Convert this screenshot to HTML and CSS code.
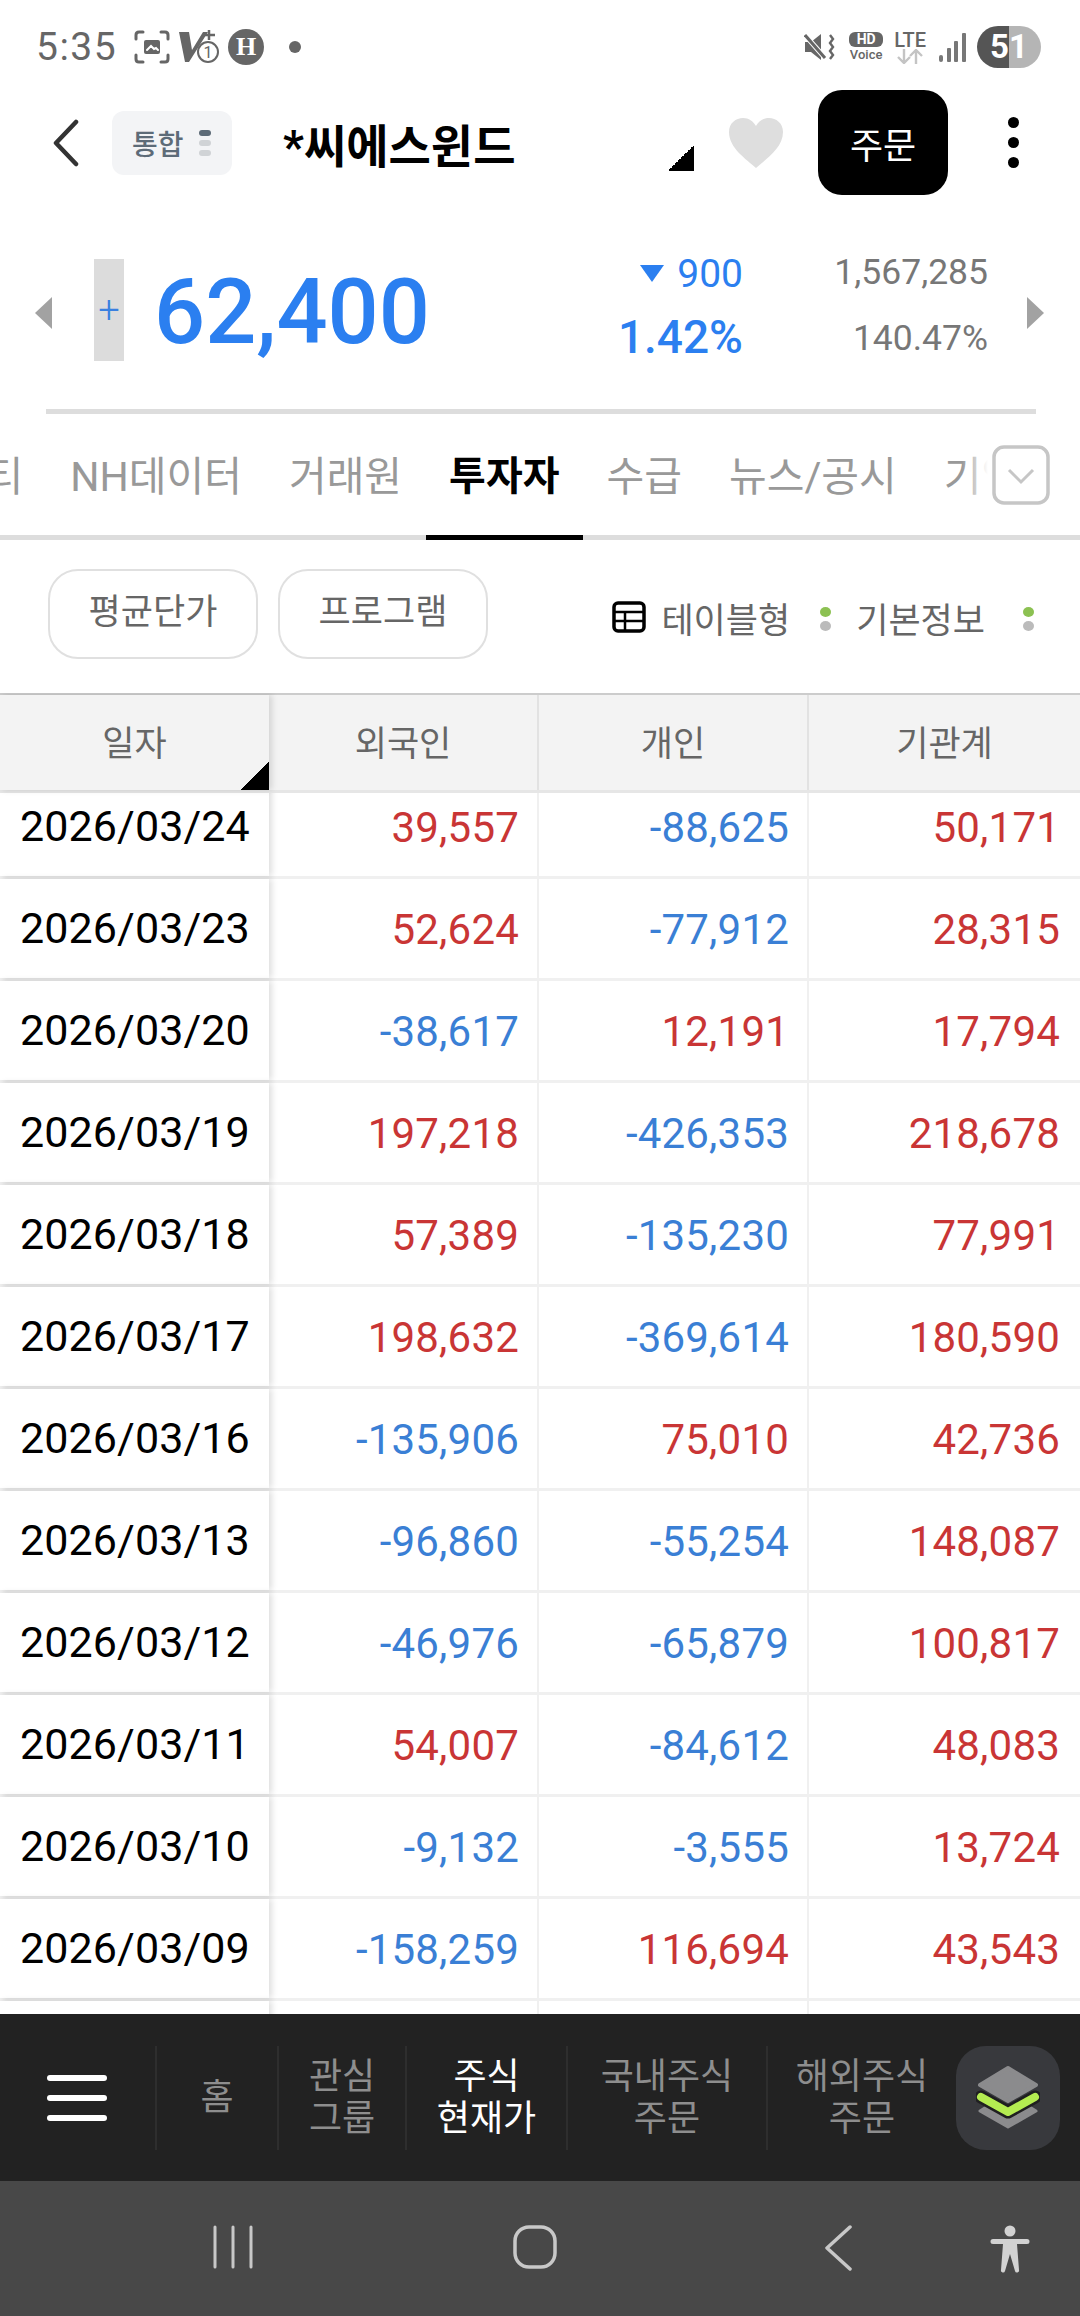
FILE: index.html
```html
<!DOCTYPE html>
<html lang="ko">
<head>
    <meta charset="UTF-8">
    <title>현재가 투자자</title>
    <meta name="viewport" content="width=device-width, initial-scale=1.0">
    <link rel="stylesheet" href="styles.css">
</head>
<body>
<div class="screen">
    <div class="status">
        <span class="clock">5:35</span>
        <svg class="st-shot" width="36" height="34" viewBox="0 0 36 34" fill="none" stroke="#666" stroke-width="3" stroke-linecap="round">
            <path d="M2 9V5q0-3 3-3h4M27 2h4q3 0 3 3v4M34 25v4q0 3-3 3h-4M9 32H5q-3 0-3-3v-4"/>
            <rect x="10" y="10" width="16" height="14" rx="2" fill="#666" stroke="none"/>
            <path d="M13 20l4-4 3 3 2-1 2 2" stroke="#fff" stroke-width="2"/>
        </svg>
        <svg class="st-v" width="40" height="34" viewBox="0 0 40 34">
            <path d="M0 2h10l3 18L24 2h5L10 32H6z" fill="#666"/>
            <path d="M30 0v10M25 5h11" stroke="#666" stroke-width="2.5"/>
            <circle cx="29" cy="22" r="10" fill="#fff" stroke="#666" stroke-width="2"/>
            <text x="29" y="28" font-size="16" text-anchor="middle" fill="#666" font-family="Roboto, sans-serif">1</text>
        </svg>
        <span class="st-h">H</span>
        <span class="st-dot"></span>
        <span class="status-gap"></span>
        <svg class="st-mute" width="32" height="30" viewBox="0 0 32 30">
            <path d="M1 10h6l10-8v26L7 20H1z" fill="#666"/>
            <path d="M0 2l22 25" stroke="#fff" stroke-width="5"/>
            <path d="M1 3l20 23" stroke="#666" stroke-width="3"/>
            <path d="M26 3l3 4-3 4 3 4-3 4 3 4-3 4" fill="none" stroke="#666" stroke-width="2.4"/>
        </svg>
        <span class="st-hd"><b>HD</b><i>Voice</i></span>
        <span class="st-lte"><b>LTE</b>
            <svg width="26" height="15" viewBox="0 0 26 15" fill="none" stroke-width="2.4">
                <path d="M7 0v13M1 8l6 6 6-6" stroke="#c4c4c4"/>
                <path d="M19 15V2M13 7l6-6 6 6" stroke="#c4c4c4"/>
            </svg>
        </span>
        <svg class="st-signal" width="27" height="29" viewBox="0 0 27 29" fill="#777">
            <rect x="0" y="22" width="4" height="7" rx="2"/>
            <rect x="8" y="15" width="4" height="14" rx="1"/>
            <rect x="15" y="8" width="4" height="21" rx="1"/>
            <rect x="23" y="0" width="4" height="29" rx="1"/>
        </svg>
        <span class="st-batt">51</span>
    </div>

    <div class="topbar">
        <svg class="back" width="26" height="48" viewBox="0 0 26 48" fill="none" stroke="#333" stroke-width="4.5" stroke-linecap="round" stroke-linejoin="round">
            <path d="M23 3L3 24l20 21"/>
        </svg>
        <div class="chip">
            <span>통합</span>
            <span class="chip-dots"><i class="on"></i><i></i><i></i></span>
        </div>
        <div class="title">*씨에스윈드</div>
        <span class="title-tri"></span>
        <svg class="heart" width="56" height="52" viewBox="0 0 56 52">
            <path d="M28 51C18 42 1 31 1 15 1 6 8 1 15 1c6 0 10 3 13 8 3-5 7-8 13-8 7 0 14 5 14 14 0 16-17 27-27 36z" fill="#dedede"/>
        </svg>
        <button class="order">주문</button>
        <div class="more"><i></i><i></i><i></i></div>
    </div>

    <div class="price">
        <span class="arrow arrow-l"></span>
        <span class="plus">+</span>
        <span class="now">62,400</span>
        <div class="change">
            <div class="chg-top"><span class="chg-tri"></span>900</div>
            <div class="chg-pct">1.42%</div>
        </div>
        <div class="volume">
            <div>1,567,285</div>
            <div>140.47%</div>
        </div>
        <span class="arrow arrow-r"></span>
    </div>
    <div class="rule"></div>

    <div class="tabs">
        <div class="tab tab-first">티</div>
        <div class="tab">NH데이터</div>
        <div class="tab">거래원</div>
        <div class="tab active">투자자</div>
        <div class="tab">수급</div>
        <div class="tab">뉴스/공시</div>
        <div class="tab">기업정보</div>
        <div class="tab-more">
            <svg width="58" height="60" viewBox="0 0 58 60" fill="#fff" stroke="#c6c6c6" stroke-width="3.5">
                <rect x="2" y="2" width="54" height="56" rx="10"/>
                <path d="M17 25l12 12 12-12" fill="none" stroke-width="3"/>
            </svg>
        </div>
    </div>

    <div class="tools">
        <button class="pill">평균단가</button>
        <button class="pill">프로그램</button>
        <div class="tools-right">
            <svg width="34" height="32" viewBox="0 0 34 32" fill="none" stroke="#000" stroke-width="2.5">
                <rect x="2" y="2" width="30" height="28" rx="4" stroke-width="3.5"/>
                <path d="M2 11h30M2 20h30M13 11v19"/>
            </svg>
            <span class="tool-text">테이블형</span>
            <span class="tool-dots"><i class="on"></i><i></i></span>
            <span class="tool-text">기본정보</span>
            <span class="tool-dots tool-dots-last"><i class="on"></i><i></i></span>
        </div>
    </div>

    <div class="grid">
        <div class="row head">
            <div class="cell date">일자</div>
            <div class="cell">외국인</div>
            <div class="cell">개인</div>
            <div class="cell">기관계</div>
        </div>
        <div class="grid-body" id="gridBody"></div>
    </div>

    <div class="nav">
        <div class="burger"><i></i><i></i><i></i></div>
        <div class="nav-item n-home">홈</div>
        <div class="nav-item n-watch">관심<br>그룹</div>
        <div class="nav-item n-cur">주식<br>현재가</div>
        <div class="nav-item n-kr">국내주식<br>주문</div>
        <div class="nav-item n-us">해외주식<br>주문</div>
        <div class="layers">
            <svg width="64" height="66" viewBox="0 0 64 66" stroke-linejoin="round" stroke-linecap="round">
                <path d="M32 3L60 20 32 36 4 20z" fill="#8b8b8d" stroke="#8b8b8d" stroke-width="4"/>
                <path d="M4 46L32 62 60 46 52 41 32 52 12 41z" fill="#8b8b8d" stroke="#8b8b8d" stroke-width="3"/>
                <path d="M5 32L32 47 59 32" fill="none" stroke="#1f1f20" stroke-width="13"/>
                <path d="M5 32L32 47 59 32" fill="none" stroke="#b4ec51" stroke-width="8"/>
            </svg>
        </div>
    </div>

    <div class="sysbar">
        <svg class="sys-recent" width="40" height="44" viewBox="0 0 40 44" stroke="#c8c8c8" stroke-width="3" stroke-linecap="round">
            <path d="M2 2v40M20 2v40M38 2v40"/>
        </svg>
        <svg class="sys-home" width="44" height="44" viewBox="0 0 44 44" fill="none" stroke="#c8c8c8" stroke-width="3.5">
            <rect x="2" y="2" width="40" height="40" rx="14"/>
        </svg>
        <svg class="sys-back" width="28" height="46" viewBox="0 0 28 46" fill="none" stroke="#c8c8c8" stroke-width="3.5" stroke-linecap="round" stroke-linejoin="round">
            <path d="M26 2L3 23l23 21"/>
        </svg>
        <svg class="sys-person" width="40" height="48" viewBox="0 0 40 48" fill="#d2d2d2">
            <circle cx="20" cy="6" r="5.5"/>
            <path d="M3 14h34a2.5 2.5 0 0 1 0 5H27l2 26a2 2 0 0 1-4 1l-5-17-5 17a2 2 0 0 1-4-1l2-26H3a2.5 2.5 0 0 1 0-5z"/>
        </svg>
    </div>
</div>

<script>
    // date, foreign, retail, institution
    const rows = [
        ['2026/03/24', '39,557', '-88,625', '50,171'],
        ['2026/03/23', '52,624', '-77,912', '28,315'],
        ['2026/03/20', '-38,617', '12,191', '17,794'],
        ['2026/03/19', '197,218', '-426,353', '218,678'],
        ['2026/03/18', '57,389', '-135,230', '77,991'],
        ['2026/03/17', '198,632', '-369,614', '180,590'],
        ['2026/03/16', '-135,906', '75,010', '42,736'],
        ['2026/03/13', '-96,860', '-55,254', '148,087'],
        ['2026/03/12', '-46,976', '-65,879', '100,817'],
        ['2026/03/11', '54,007', '-84,612', '48,083'],
        ['2026/03/10', '-9,132', '-3,555', '13,724'],
        ['2026/03/09', '-158,259', '116,694', '43,543'],
        ['', '', '', '']
    ];

    const gridBody = document.getElementById('gridBody');
    rows.forEach(row => {
        const el = document.createElement('div');
        el.className = 'row';
        row.forEach((value, i) => {
            const cell = document.createElement('div');
            if (i === 0) {
                cell.className = 'cell date';
            } else {
                cell.className = 'cell num ' + (value.charAt(0) === '-' ? 'down' : 'up');
            }
            cell.textContent = value;
            el.appendChild(cell);
        });
        gridBody.appendChild(el);
    });
</script>
</body>
</html>
```

FILE: styles.css
```css
* {
    box-sizing: border-box;
}
body {
    margin: 0;
    background-color: #fff;
    font-family: Roboto, "Noto Sans CJK KR", sans-serif;
}
i {
    display: block;
    font-style: normal;
}
button {
    font-family: inherit;
    cursor: pointer;
}
.screen {
    width: 1080px;
    height: 2316px;
    display: flex;
    flex-direction: column;
    overflow: hidden;
}

/* status bar */
.status {
    height: 90px;
    flex: none;
    padding: 4px 39px 0 36px;
    display: flex;
    align-items: center;
    color: #666;
}
.clock {
    font-size: 39px;
    letter-spacing: 1.5px;
    width: 98px;
}
.st-shot {
    margin-right: 9px;
}
.st-v {
    margin-right: 9px;
}
.st-h {
    width: 36px;
    height: 36px;
    border-radius: 50%;
    background: #666;
    color: #fff;
    font: bold 26px "Liberation Serif", serif;
    display: flex;
    align-items: center;
    justify-content: center;
}
.st-dot {
    width: 12px;
    height: 12px;
    border-radius: 50%;
    background: #666;
    margin-left: 25px;
}
.status-gap {
    flex: 1;
}
.st-hd {
    width: 36px;
    margin-left: 12px;
    display: flex;
    flex-direction: column;
    align-items: center;
    color: #666;
}
.st-hd b {
    width: 34px;
    height: 15px;
    line-height: 15px;
    border-radius: 6px;
    background: #666;
    color: #fff;
    font-size: 14px;
    text-align: center;
}
.st-hd i {
    font-size: 13px;
    line-height: 15px;
    font-weight: 500;
}
.st-lte {
    margin-left: 10px;
    display: flex;
    flex-direction: column;
    align-items: center;
}
.st-lte b {
    font-size: 20px;
    font-weight: 500;
    line-height: 18px;
    color: #666;
}
.st-signal {
    margin-left: 13px;
}
.st-batt {
    width: 64px;
    height: 42px;
    margin-left: 11px;
    border-radius: 21px;
    background: linear-gradient(90deg, #555 50%, #b5b5b5 50%);
    color: #fff;
    font-size: 33px;
    font-weight: 700;
    line-height: 42px;
    text-align: center;
}

/* stock title row */
.topbar {
    height: 105px;
    flex: none;
    display: flex;
    align-items: center;
    padding-left: 53px;
}
.back {
    margin-right: 33px;
}
.chip {
    width: 120px;
    height: 64px;
    border-radius: 12px;
    background: #f3f4f6;
    color: #5d6b78;
    font-size: 28px;
    font-weight: 500;
    display: flex;
    align-items: center;
    padding-left: 20px;
}
.chip-dots {
    margin-left: 15px;
}
.chip-dots i {
    width: 12px;
    height: 6px;
    border-radius: 3px;
    background: #d0d3d6;
    margin: 4px 0;
}
.chip-dots i.on {
    background: #5d6b78;
}
.title {
    width: 385px;
    margin-left: 51px;
    font-size: 46px;
    font-weight: 700;
    color: #000;
}
.title-tri {
    width: 26px;
    height: 26px;
    margin-top: 30px;
    background: linear-gradient(135deg, transparent 50%, #000 50%);
}
.heart {
    margin-left: 34px;
}
.order {
    width: 130px;
    height: 105px;
    margin-left: 34px;
    border: none;
    border-radius: 24px;
    background: #000;
    color: #fff;
    font-size: 36px;
}
.more {
    margin-left: 60px;
}
.more i {
    width: 11px;
    height: 11px;
    border-radius: 50%;
    background: #000;
    margin: 9px 0;
}

/* price block */
.price {
    height: 214px;
    flex: none;
    padding: 22px 36px 0 35px;
    display: flex;
    align-items: center;
}
.arrow {
    width: 0;
    height: 0;
    border-top: 16px solid transparent;
    border-bottom: 16px solid transparent;
}
.arrow-l {
    border-right: 17px solid #a2a2a2;
}
.arrow-r {
    border-left: 17px solid #a2a2a2;
    margin-left: 39px;
}
.plus {
    width: 30px;
    height: 102px;
    margin: -6px 0 0 42px;
    background: #dcdcdc;
    color: #3a80e0;
    font-size: 38px;
    font-weight: 300;
    line-height: 102px;
    text-align: center;
}
.now {
    margin: -2px 0 0 30px;
    width: 274px;
    font-size: 90px;
    font-weight: 500;
    color: #2b7ff0;
    white-space: nowrap;
}
.change {
    width: 315px;
    text-align: right;
    color: #2b7ff0;
    margin-top: -16px;
}
.chg-top {
    font-size: 39px;
    line-height: 50px;
    display: flex;
    justify-content: flex-end;
    align-items: center;
}
.chg-tri {
    width: 0;
    height: 0;
    margin-right: 13px;
    border-left: 12px solid transparent;
    border-right: 12px solid transparent;
    border-top: 17px solid #2b7ff0;
}
.chg-pct {
    font-size: 46px;
    font-weight: 500;
    line-height: 50px;
    margin-top: 13px;
}
.volume {
    width: 245px;
    margin-top: -16px;
    text-align: right;
    color: #777;
    font-size: 35.5px;
}
.volume div {
    line-height: 50px;
}
.volume div + div {
    margin-top: 16px;
}
.rule {
    height: 5px;
    flex: none;
    margin: 0 44px 0 46px;
    background: #ddd;
}

/* tabs */
.tabs {
    position: relative;
    height: 126px;
    flex: none;
    display: flex;
    overflow: hidden;
    background: linear-gradient(#ddd, #ddd) bottom / 100% 5px no-repeat;
}
.tab {
    flex: none;
    height: 126px;
    padding: 0 23.5px 3px;
    display: flex;
    align-items: center;
    font-size: 41px;
    color: #999;
    white-space: nowrap;
    border-bottom: 5px solid transparent;
}
.tab-first {
    margin-left: -38px;
}
.tab.active {
    color: #000;
    font-size: 40px;
    font-weight: 700;
    border-bottom-color: #000;
}
.tab-more {
    position: absolute;
    top: 0;
    right: 0;
    width: 118px;
    height: 121px;
    padding: 31px 0 0 30px;
    background: linear-gradient(90deg, rgba(255, 255, 255, 0) 0, #fff 26px);
}

/* filter buttons */
.tools {
    height: 153px;
    flex: none;
    padding: 29px 45px 0 48px;
    display: flex;
    align-items: flex-start;
}
.pill {
    width: 210px;
    height: 90px;
    margin-right: 20px;
    border: 2px solid #e0e0e0;
    border-radius: 30px;
    background: #fff;
    color: #666;
    font-size: 35px;
    padding-bottom: 12px;
}
.tools-right {
    margin-left: auto;
    height: 90px;
    padding-top: 6px;
    display: flex;
    align-items: center;
}
.tool-text {
    font-size: 35px;
    color: #666;
    margin-left: 15px;
}
.tool-dots {
    margin-left: 30px;
    width: 12px;
}
.tool-dots-last {
    margin-left: 38px;
}
.tools-right .tool-dots + .tool-text {
    margin-left: 24px;
}
.tool-dots i {
    width: 11px;
    height: 10px;
    border-radius: 50%;
    background: #bbb;
    margin-top: 4px;
}
.tool-dots i.on {
    background: #8cc152;
}

/* investor table */
.grid {
    flex: 1;
    min-height: 0;
    display: flex;
    flex-direction: column;
    overflow: hidden;
}
.row {
    display: grid;
    grid-template-columns: 269px 270px 270px 271px;
    height: 102px;
    flex: none;
    border-bottom: 3px solid #f0f0f0;
}
.cell {
    display: flex;
    align-items: center;
    border-right: 2px solid #f0f0f0;
    white-space: nowrap;
}
.cell:last-child {
    border-right: none;
    padding-right: 20px;
}
.date {
    position: relative;
    padding: 0 0 2px 20px;
    background: #fff;
    font-size: 43px;
    letter-spacing: 0.1px;
    color: #000;
    border-right: none;
    box-shadow: 3px 0 6px rgba(0, 0, 0, 0.13);
}
.num {
    justify-content: flex-end;
    padding: 2px 18px 0 0;
    font-size: 42px;
    letter-spacing: 0.2px;
}
.num.up {
    color: #c93535;
}
.num.down {
    color: #3a7fd5;
}
.row.head {
    position: relative;
    z-index: 2;
    height: 100px;
    background: #f3f3f3;
    border-top: 2px solid #ccc;
    border-bottom: 3px solid #e6e6e6;
}
.row.head .cell {
    justify-content: center;
    padding: 0 0 4px;
    font-size: 35px;
    color: #666;
    letter-spacing: 0;
    border-right-color: #e2e2e2;
}
.row.head .date {
    background: #f3f3f3;
}
.row.head .date::after {
    content: "";
    position: absolute;
    right: 0;
    bottom: 0;
    width: 28px;
    height: 29px;
    background: linear-gradient(135deg, transparent 50%, #000 50%);
}
.grid-body {
    flex: 1;
    min-height: 0;
    overflow: hidden;
}
.grid-body .row:first-child {
    margin-top: -16px;
}

/* bottom menu */
.nav {
    height: 167px;
    flex: none;
    display: flex;
    align-items: center;
    background: #222;
}
.burger {
    width: 155px;
    padding-left: 47px;
}
.burger i {
    width: 60px;
    height: 6px;
    margin: 14px 0;
    border-radius: 3px;
    background: #fff;
}
.nav-item {
    height: 104px;
    border-left: 2px solid #2e2e2e;
    display: flex;
    align-items: center;
    justify-content: center;
    text-align: center;
    font-size: 36px;
    line-height: 42px;
    color: #8e8e8e;
}
.n-home {
    width: 122px;
}
.n-watch {
    width: 128px;
}
.n-cur {
    width: 161px;
    color: #fff;
}
.n-kr {
    width: 200px;
}
.n-us {
    width: 190px;
}
.layers {
    width: 104px;
    height: 104px;
    border-radius: 30px;
    background: #38393d;
    display: flex;
    align-items: center;
    justify-content: center;
}

/* android nav */
.sysbar {
    height: 135px;
    flex: none;
    padding: 44px 0 0 213px;
    display: flex;
    align-items: flex-start;
    background: #484848;
}
.sys-home {
    margin-left: 260px;
}
.sys-back {
    margin-left: 267px;
}
.sys-person {
    margin-left: 138px;
}
```
